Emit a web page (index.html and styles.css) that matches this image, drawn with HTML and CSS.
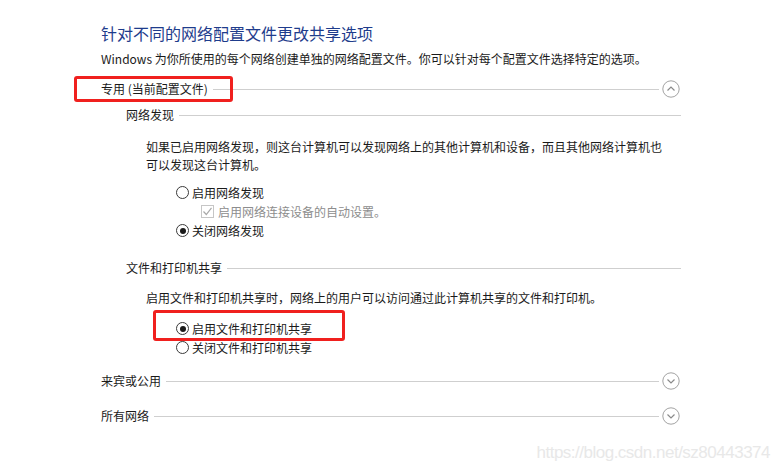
FILE: index.html
```html
<!DOCTYPE html>
<html lang="zh-CN">
<head>
  <meta charset="UTF-8" />
  <title>高级共享设置</title>
  <link rel="stylesheet" href="styles.css">
</head>
<body>
  <div class="page">
    <h1 class="title">针对不同的网络配置文件更改共享选项</h1>
    <p class="intro">Windows 为你所使用的每个网络创建单独的网络配置文件。你可以针对每个配置文件选择特定的选项。</p>

    <section class="profile">
      <div class="profile-head">
        <span>专用 (当前配置文件)</span>
        <span class="rule"></span>
        <svg class="toggle" width="18" height="18" viewBox="0 0 18 18"><circle cx="9" cy="9" r="8.2" /><polyline points="5.5,10.5 9,7 12.5,10.5" /></svg>
      </div>

      <div class="group">
        <div class="group-head"><span>网络发现</span><span class="rule"></span></div>
        <p class="desc">如果已启用网络发现，则这台计算机可以发现网络上的其他计算机和设备，而且其他网络计算机也可以发现这台计算机。</p>
        <div class="options">
          <div class="opt"><span class="radio"></span>启用网络发现</div>
          <div class="opt sub disabled"><span class="check"><svg width="11" height="11" viewBox="0 0 11 11"><polyline points="1.5,5.5 4.3,8.5 9.5,1.8" /></svg></span>启用网络连接设备的自动设置。</div>
          <div class="opt"><span class="radio on"></span>关闭网络发现</div>
        </div>
      </div>

      <div class="group">
        <div class="group-head"><span>文件和打印机共享</span><span class="rule"></span></div>
        <p class="desc">启用文件和打印机共享时，网络上的用户可以访问通过此计算机共享的文件和打印机。</p>
        <div class="options options-share">
          <div class="opt"><span class="radio on"></span>启用文件和打印机共享</div>
          <div class="opt"><span class="radio"></span>关闭文件和打印机共享</div>
        </div>
      </div>
    </section>

    <section class="profile collapsed">
      <div class="profile-head">
        <span>来宾或公用</span>
        <span class="rule"></span>
        <svg class="toggle" width="18" height="18" viewBox="0 0 18 18"><circle cx="9" cy="9" r="8.2" /><polyline points="5.5,7.5 9,11 12.5,7.5" /></svg>
      </div>
    </section>

    <section class="profile collapsed">
      <div class="profile-head">
        <span>所有网络</span>
        <span class="rule"></span>
        <svg class="toggle" width="18" height="18" viewBox="0 0 18 18"><circle cx="9" cy="9" r="8.2" /><polyline points="5.5,7.5 9,11 12.5,7.5" /></svg>
      </div>
    </section>
  </div>

  <!-- annotations drawn over the screenshot -->
  <div class="mark mark-profile"></div>
  <div class="mark mark-share"></div>
  <div class="watermark">https://blog.csdn.net/sz80443374</div>
</body>
</html>
```

FILE: styles.css
```css
body {
  margin: 0;
  position: relative;
  width: 778px;
  height: 472px;
  overflow: hidden;
  background: #fff;
  color: #1a1a1a;
  font-family: "Noto Sans CJK SC", "Noto Sans", sans-serif;
  font-size: 12px;
}
.page {
  padding: 22px 0 0 101px;
  width: 580px;
}
.title {
  margin: 0;
  font-size: 16px;
  font-weight: normal;
  line-height: 22px;
  color: #1e3c8c;
}
.intro {
  margin: 6px 0 0;
  line-height: 18px;
}
.profile-head,
.group-head {
  display: flex;
  align-items: center;
  height: 20px;
  line-height: 20px;
}
.profile-head {
  margin-top: 11px;
}
.collapsed .profile-head {
  margin-top: 14px;
}
.collapsed + .collapsed .profile-head {
  margin-top: 15px;
}
.rule {
  flex: 1;
  height: 1px;
  background: #cfcfcf;
  margin-left: 5px;
}
.toggle {
  margin-left: 3px;
  margin-right: 1px;
}
.toggle circle {
  fill: none;
  stroke: #a3a3a3;
  stroke-width: 1;
}
.toggle polyline {
  fill: none;
  stroke: #8a8a8a;
  stroke-width: 1.2;
}
.group {
  padding-left: 25px;
}
.group-head {
  margin-top: 6px;
}
.group + .group .group-head {
  margin-top: 18px;
}
.desc {
  margin: 13px 0 0 20px;
  width: 520px;
  line-height: 18px;
}
.group + .group .desc {
  margin-top: 11px;
}
.options {
  margin: 9px 0 0 50px;
}
.options-share {
  margin-top: 12px;
}
.opt {
  display: flex;
  align-items: center;
  height: 19px;
  line-height: 19px;
}
.opt.sub {
  padding-left: 25px;
}
.disabled {
  color: #8d8d8d;
}
.radio {
  position: relative;
  box-sizing: border-box;
  width: 13px;
  height: 13px;
  margin-right: 3px;
  border: 1px solid #3a3a3a;
  border-radius: 50%;
  background: #fff;
}
.radio.on::after {
  content: "";
  position: absolute;
  left: 2.5px;
  top: 2.5px;
  width: 6px;
  height: 6px;
  border-radius: 50%;
  background: #1a1a1a;
}
.check {
  box-sizing: border-box;
  display: flex;
  align-items: center;
  justify-content: center;
  width: 13px;
  height: 13px;
  margin-right: 4px;
  border: 1px solid #c6c6c6;
}
.check polyline {
  fill: none;
  stroke: #a8a8a8;
  stroke-width: 1.2;
}
.mark {
  position: absolute;
  box-sizing: border-box;
  border: 3px solid #f0201e;
  border-radius: 3px;
}
.mark-profile {
  left: 74px;
  top: 76px;
  width: 159px;
  height: 26px;
}
.mark-share {
  left: 153px;
  top: 310px;
  width: 192px;
  height: 31px;
}
.watermark {
  position: absolute;
  right: 8px;
  top: 443px;
  font-family: "Liberation Sans", Arial, sans-serif;
  font-size: 17px;
  letter-spacing: -0.5px;
  line-height: 20px;
  color: #e8e8e8;
}
```
